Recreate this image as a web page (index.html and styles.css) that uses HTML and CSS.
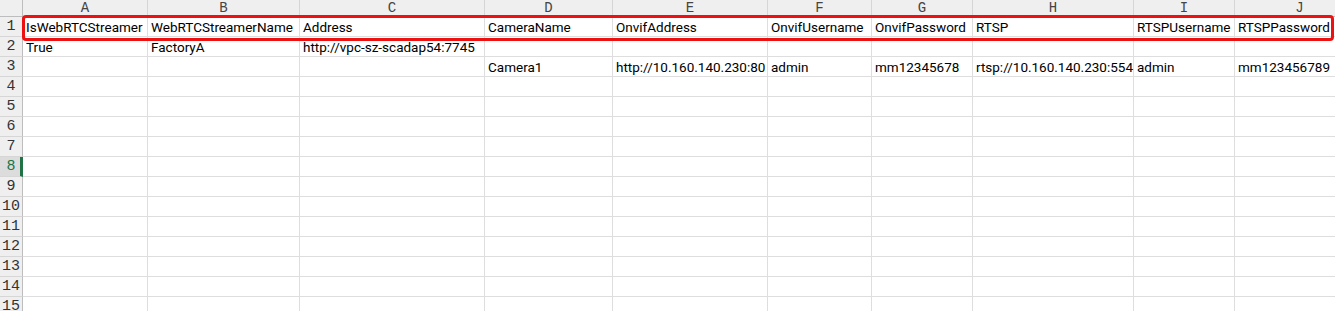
FILE: index.html
```html
<!DOCTYPE html>
<html>
<head>
<meta charset="utf-8">
<link rel="stylesheet" href="styles.css">
</head>
<body>
<div class="sheet">
  <div class="corner"></div>
  <div class="ch">A</div><div class="ch">B</div><div class="ch">C</div><div class="ch">D</div><div class="ch">E</div><div class="ch">F</div><div class="ch">G</div><div class="ch">H</div><div class="ch">I</div><div class="ch">J</div>

  <div class="rh">1</div>
  <div class="c">IsWebRTCStreamer</div><div class="c">WebRTCStreamerName</div><div class="c">Address</div><div class="c">CameraName</div><div class="c">OnvifAddress</div><div class="c">OnvifUsername</div><div class="c">OnvifPassword</div><div class="c">RTSP</div><div class="c">RTSPUsername</div><div class="c">RTSPPassword</div>

  <div class="rh">2</div>
  <div class="c">True</div><div class="c">FactoryA</div><div class="c">http://vpc-sz-scadap54:7745</div><div class="c"></div><div class="c"></div><div class="c"></div><div class="c"></div><div class="c"></div><div class="c"></div><div class="c"></div>

  <div class="rh">3</div>
  <div class="c"></div><div class="c"></div><div class="c"></div><div class="c">Camera1</div><div class="c">http://10.160.140.230:80</div><div class="c">admin</div><div class="c">mm12345678</div><div class="c">rtsp://10.160.140.230:554</div><div class="c">admin</div><div class="c">mm123456789</div>

  <div class="rh">4</div>
  <div class="c"></div><div class="c"></div><div class="c"></div><div class="c"></div><div class="c"></div><div class="c"></div><div class="c"></div><div class="c"></div><div class="c"></div><div class="c"></div>
  <div class="rh">5</div>
  <div class="c"></div><div class="c"></div><div class="c"></div><div class="c"></div><div class="c"></div><div class="c"></div><div class="c"></div><div class="c"></div><div class="c"></div><div class="c"></div>
  <div class="rh">6</div>
  <div class="c"></div><div class="c"></div><div class="c"></div><div class="c"></div><div class="c"></div><div class="c"></div><div class="c"></div><div class="c"></div><div class="c"></div><div class="c"></div>
  <div class="rh">7</div>
  <div class="c"></div><div class="c"></div><div class="c"></div><div class="c"></div><div class="c"></div><div class="c"></div><div class="c"></div><div class="c"></div><div class="c"></div><div class="c"></div>
  <div class="rh sel">8</div>
  <div class="c"></div><div class="c"></div><div class="c"></div><div class="c"></div><div class="c"></div><div class="c"></div><div class="c"></div><div class="c"></div><div class="c"></div><div class="c"></div>
  <div class="rh">9</div>
  <div class="c"></div><div class="c"></div><div class="c"></div><div class="c"></div><div class="c"></div><div class="c"></div><div class="c"></div><div class="c"></div><div class="c"></div><div class="c"></div>
  <div class="rh">10</div>
  <div class="c"></div><div class="c"></div><div class="c"></div><div class="c"></div><div class="c"></div><div class="c"></div><div class="c"></div><div class="c"></div><div class="c"></div><div class="c"></div>
  <div class="rh">11</div>
  <div class="c"></div><div class="c"></div><div class="c"></div><div class="c"></div><div class="c"></div><div class="c"></div><div class="c"></div><div class="c"></div><div class="c"></div><div class="c"></div>
  <div class="rh">12</div>
  <div class="c"></div><div class="c"></div><div class="c"></div><div class="c"></div><div class="c"></div><div class="c"></div><div class="c"></div><div class="c"></div><div class="c"></div><div class="c"></div>
  <div class="rh">13</div>
  <div class="c"></div><div class="c"></div><div class="c"></div><div class="c"></div><div class="c"></div><div class="c"></div><div class="c"></div><div class="c"></div><div class="c"></div><div class="c"></div>
  <div class="rh">14</div>
  <div class="c"></div><div class="c"></div><div class="c"></div><div class="c"></div><div class="c"></div><div class="c"></div><div class="c"></div><div class="c"></div><div class="c"></div><div class="c"></div>
  <div class="rh">15</div>
  <div class="c"></div><div class="c"></div><div class="c"></div><div class="c"></div><div class="c"></div><div class="c"></div><div class="c"></div><div class="c"></div><div class="c"></div><div class="c"></div>

  <div class="highlight"></div>
</div>
</body>
</html>
```

FILE: styles.css
```css
html, body {
  margin: 0;
  padding: 0;
  background: #ffffff;
  overflow: hidden;
}

.sheet {
  position: relative;
  width: 1335px;
  height: 311px;
  overflow: hidden;
  display: grid;
  grid-template-columns: 23px 125px 152px 185px 128px 155px 104px 101px 161px 101px 130px;
  grid-template-rows: 17px;
  grid-auto-rows: 20px;
  font-family: Roboto, "Liberation Sans", "Noto Sans CJK SC", sans-serif;
  font-size: 13.5px;
  color: #000000;
}

.corner {
  background: #efefef;
  border-right: 1px solid #bdbdbd;
  border-bottom: 1px solid #bdbdbd;
  box-sizing: border-box;
}

.ch {
  background: #efefef;
  border-right: 1px solid #d6d6d6;
  border-bottom: 1px solid #bdbdbd;
  box-sizing: border-box;
  font-family: "Liberation Mono", "DejaVu Sans Mono", monospace;
  font-size: 14px;
  color: #444444;
  text-align: center;
  line-height: 16px;
}

.rh {
  background: #efefef;
  border-right: 1px solid #bdbdbd;
  border-bottom: 1px solid #d6d6d6;
  box-sizing: border-box;
  font-family: "Liberation Mono", "DejaVu Sans Mono", monospace;
  font-size: 15px;
  color: #333333;
  text-align: center;
  line-height: 20px;
}

.rh.sel {
  background: #dcdcdc;
  color: #217346;
  border-right: 3px solid #217346;
  padding-left: 2px;
}

.c {
  border-right: 1px solid #dedede;
  border-bottom: 1px solid #dedede;
  box-sizing: border-box;
  padding: 1px 0 0 3px;
  line-height: 19px;
  white-space: nowrap;
}

.highlight {
  position: absolute;
  left: 22px;
  top: 15px;
  width: 1312px;
  height: 26px;
  box-sizing: border-box;
  border: 3px solid #ee1111;
  border-radius: 4px;
  pointer-events: none;
}
```
